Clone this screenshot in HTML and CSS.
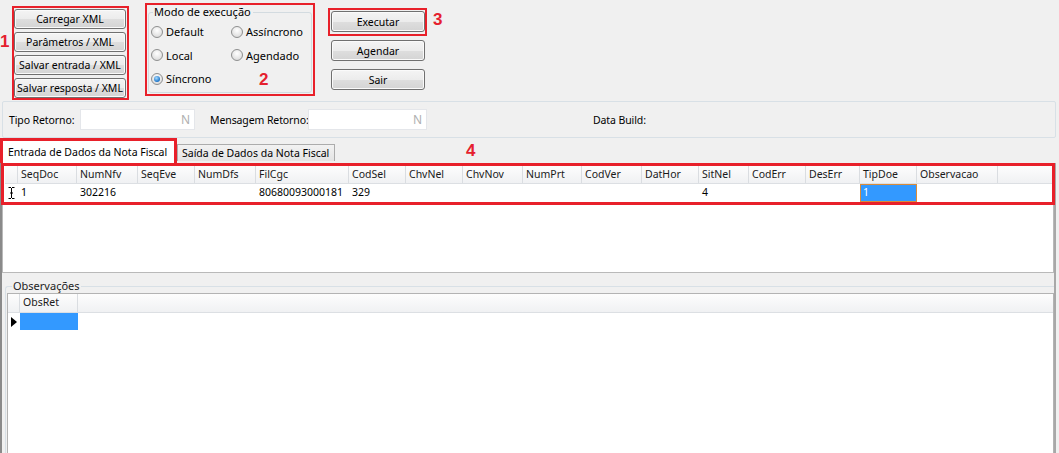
FILE: index.html
```html
<!DOCTYPE html>
<html>
<head>
    <meta charset="utf-8">
    <title>Nota Fiscal</title>
    <link rel="stylesheet" href="styles.css">
</head>
<body>
    <div class="top">
        <span class="mark m1">1</span>
        <div class="redbox box1">
            <button class="btn">Carregar XML</button>
            <button class="btn">Parâmetros / XML</button>
            <button class="btn">Salvar entrada / XML</button>
            <button class="btn">Salvar resposta / XML</button>
        </div>
        <div class="redbox box2">
            <fieldset class="group">
                <legend>Modo de execução</legend>
                <div class="radios">
                    <label class="radio"><span class="dot"></span>Default</label>
                    <label class="radio"><span class="dot"></span>Assíncrono</label>
                    <label class="radio"><span class="dot"></span>Local</label>
                    <label class="radio"><span class="dot"></span>Agendado</label>
                    <label class="radio"><span class="dot on"></span>Síncrono</label>
                    <span class="mark m2">2</span>
                </div>
            </fieldset>
        </div>
        <div class="actions">
            <div class="redbox box3">
                <button class="btn btn-w">Executar</button>
            </div>
            <button class="btn btn-w btn-a">Agendar</button>
            <button class="btn btn-w btn-s">Sair</button>
        </div>
        <span class="mark m3">3</span>
    </div>

    <div class="panel">
        <span class="lbl l1">Tipo Retorno:</span>
        <div class="field f1">N</div>
        <span class="lbl l2">Mensagem Retorno:</span>
        <div class="field f2">N</div>
        <span class="lbl l3">Data Build:</span>
    </div>

    <div class="tabs">
        <div class="tab active">Entrada de Dados da Nota Fiscal</div>
        <div class="tab t2">Saída de Dados da Nota Fiscal</div>
        <span class="mark m4">4</span>
    </div>

    <div class="page">
        <div class="grid grid1">
            <div class="redrow">
                <div class="row head">
                    <div></div>
                    <div>SeqDoc</div><div>NumNfv</div><div>SeqEve</div><div>NumDfs</div>
                    <div>FilCgc</div><div>CodSel</div><div>ChvNel</div><div>ChvNov</div>
                    <div>NumPrt</div><div>CodVer</div><div>DatHor</div><div>SitNel</div>
                    <div>CodErr</div><div>DesErr</div><div>TipDoe</div><div>Observacao</div>
                    <div class="last"></div>
                </div>
                <div class="row data">
                    <div class="ind">
                        <svg width="7" height="12" viewBox="0 0 7 12"><path d="M0.5 0.5h2.5M4 0.5h2.5M3.5 1v10M0.5 11.5h2.5M4 11.5h2.5M2 6h3" stroke="#000" stroke-width="1" fill="none"/></svg>
                    </div>
                    <div>1</div><div>302216</div><div></div><div></div>
                    <div>80680093000181</div><div>329</div><div></div><div></div>
                    <div></div><div></div><div></div><div>4</div>
                    <div></div><div></div><div class="sel">1</div><div></div>
                    <div class="last"></div>
                </div>
            </div>
        </div>

        <fieldset class="obs">
            <legend>Observações</legend>
            <div class="grid grid2">
                <div class="row2 head">
                    <div></div><div>ObsRet</div><div class="last"></div>
                </div>
                <div class="row2 data">
                    <div class="ind2">
                        <svg width="6" height="10" viewBox="0 0 6 10"><polygon points="0,0 6,5 0,10" fill="#000"/></svg>
                    </div>
                    <div class="sel2"></div><div class="last"></div>
                </div>
            </div>
        </fieldset>
    </div>
</body>
</html>
```

FILE: styles.css
```css
*{
	margin: 0;
	padding: 0;
	box-sizing: border-box;
}
body{
	width: 1059px;
	height: 453px;
	overflow: hidden;
	background-color: #f0f0f0;
	font-family: "Noto Sans", "Open Sans", sans-serif;
	font-size: 10.5px;
	color: #000;
}
.mark{
	font-family: "Liberation Sans", Arial, sans-serif;
	font-weight: bold;
	font-size: 17px;
	line-height: 17px;
	color: #e5202e;
}
.redbox{
	border: 2px solid #e8202a;
}

/* barra de cima */
.top{
	display: flex;
	align-items: flex-start;
	height: 100px;
}
.m1{
	width: 12px;
	margin-top: 33px;
}
.box1{
	width: 117px;
	height: 94px;
	margin-top: 6px;
	padding: 1px 1px 0 0;
	display: flex;
	flex-direction: column;
	gap: 3px;
}
.btn{
	width: 112px;
	height: 21px;
	padding: 0;
	border: 1px solid #707070;
	border-radius: 3px;
	background: linear-gradient(#f4f4f4, #ececec 50%, #dedede 51%, #d4d4d4);
	box-shadow: inset 0 0 0 1px #fafafa;
	font-family: inherit;
	font-size: 10.5px;
	color: #000;
	line-height: 18px;
	white-space: nowrap;
}
.box2{
	width: 170px;
	height: 93px;
	margin: 3px 0 0 16px;
	padding: 0 1px;
}
.group{
	height: 88px;
	border: 1px solid #d3dbe0;
	border-radius: 3px;
	padding: 0 0 0 2px;
}
.group legend{
	margin-left: 2px;
	padding: 0 2px 0 1px;
	line-height: 14px;
	font-size: 11px;
}
.radios{
	display: grid;
	grid-template-columns: 80px 80px;
	grid-auto-rows: 23.5px;
	margin-top: 1px;
	font-size: 11px;
}
.radio{
	display: flex;
	align-items: center;
	gap: 3px;
}
.dot{
	width: 12px;
	height: 12px;
	border-radius: 50%;
	border: 1px solid #8e8f8f;
	background: radial-gradient(circle at 50% 35%, #ffffff, #dcdcdc 80%);
	display: flex;
	align-items: center;
	justify-content: center;
}
.dot.on::after{
	content: "";
	width: 6px;
	height: 6px;
	border-radius: 50%;
	background: radial-gradient(circle at 40% 35%, #a8dcff, #1a73c8 70%, #0d4f8f);
}
.m2{
	padding-left: 28px;
	padding-top: 4px;
}
.actions{
	display: flex;
	flex-direction: column;
	margin: 8px 0 0 13px;
}
.box3{
	width: 99px;
	height: 28px;
	padding: 1px;
}
.btn-w{
	width: 94px;
}
.btn-a{
	margin: 4px 0 0 3px;
}
.btn-s{
	margin: 8px 0 0 3px;
}
.m3{
	margin: 11px 0 0 6px;
}

/* painel retorno */
.panel{
	display: flex;
	align-items: center;
	height: 37px;
	margin: 1px 3px 0 2px;
	border: 1px solid #d8e0e6;
	border-radius: 2px;
	padding-left: 6px;
	font-size: 10.5px;
	letter-spacing: -0.1px;
}
.lbl{
	flex-shrink: 0;
	white-space: nowrap;
}
.l1{
	width: 71px;
}
.field{
	flex-shrink: 0;
	height: 21px;
	background-color: #fff;
	border: 1px solid #e4e6ea;
	color: #b0b0b0;
	text-align: right;
	padding-right: 4px;
	line-height: 19px;
	font-size: 12px;
}
.f1{
	width: 115px;
}
.l2{
	width: 98px;
	margin-left: 15px;
}
.f2{
	width: 119px;
}
.l3{
	margin-left: 166px;
}

/* abas */
.tabs{
	display: flex;
	align-items: flex-end;
	height: 24px;
	margin-top: 1px;
}
.tab{
	height: 17px;
	padding: 0 0 0 4px;
	border: 1px solid #acacac;
	border-bottom: 0;
	background: linear-gradient(#f2f2f2, #e4e4e4);
	line-height: 16px;
	margin-bottom: 2px;
	white-space: nowrap;
}
.t2{
	width: 158px;
}
.tab.active{
	width: 177px;
	height: 25px;
	padding: 3px 0 0 5px;
	background: #fff;
	border: 3px solid #e8202a;
	border-bottom: 0;
	margin-bottom: 0;
}
.m4{
	align-self: flex-start;
	margin: 3px 0 0 131px;
}

/* pagina */
.page{
	height: 291px;
	border-left: 2px solid #8a8a8a;
	border-right: 2px solid #a8a8a8;
	margin-right: 3px;
	background-color: #f0f0f0;
}
.grid1{
	height: 110px;
	background-color: #fff;
	border: 1px solid #b9b9b9;
	border-top: 0;
}
.redrow{
	border: 3px solid #e8202a;
	margin-left: -2px;
	margin-right: -2px;
	height: 42px;
	padding: 0 0 0 1px;
}
.row{
	display: grid;
	grid-template-columns: 13px 59px 61px 57px 61px 93px 57px 57px 60px 59px 60px 57px 50px 57px 54px 57px 81px 1fr;
}
.head{
	height: 18px;
	background: linear-gradient(#fdfdfd, #f0f1f3);
	border-bottom: 1px solid #dcdfe3;
	color: #1a1a1a;
}
.head div{
	border-right: 1px solid #dadde1;
	padding-left: 3px;
	line-height: 17px;
	white-space: nowrap;
}
.head .last{
	border-right: 0;
}
.data{
	height: 18px;
}
.data div{
	padding-left: 3px;
	line-height: 17px;
}
.data .ind{
	padding: 3px 0 0 3px;
	line-height: 0;
}
.data .sel{
	background-color: #3399ff;
	border: 1px solid #d98c3a;
	color: #fff;
	padding-left: 2px;
	line-height: 15px;
}

/* observacoes */
.obs{
	margin: 7px 0 0 3px;
	height: 180px;
	border: 1px solid #d8e0e6;
	border-right: 0;
	border-bottom: 0;
	border-radius: 3px 0 0 0;
	padding: 0 0 0 1px;
}
.obs legend{
	margin-left: 5px;
	padding: 0 1px;
	line-height: 12px;
	color: #222;
	font-size: 11px;
}
.grid2{
	height: 170px;
	margin-top: 1px;
	background-color: #fff;
	border: 1px solid #b3b3b3;
	border-bottom: 0;
}
.row2{
	display: grid;
	grid-template-columns: 12px 58px 1fr;
}
.row2.head{
	height: 19px;
}
.row2.data{
	height: 18px;
}
.row2 .ind2{
	padding: 4px 0 0 3px;
	line-height: 0;
}
.row2 .sel2{
	background-color: #3399ff;
	height: 17px;
}
```
